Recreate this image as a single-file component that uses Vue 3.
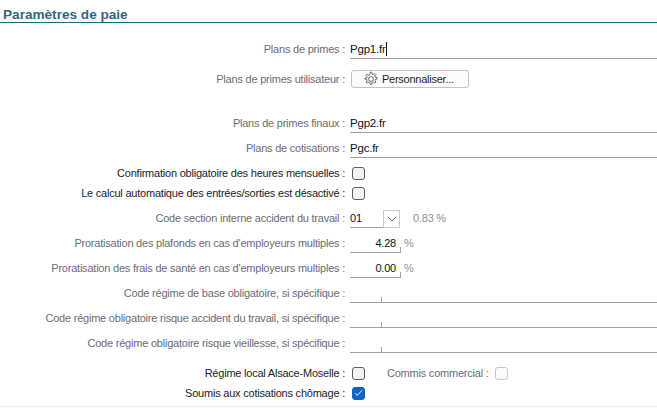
<script setup>
const gear = "M9 1.5h2l.4 2.2 1.5.6 1.8-1.3 1.4 1.4-1.3 1.8.6 1.5 2.2.4v2l-2.2.4-.6 1.5 1.3 1.8-1.4 1.4-1.8-1.3-1.5.6-.4 2.2H9l-.4-2.2-1.5-.6-1.8 1.3-1.4-1.4 1.3-1.8-.6-1.5-2.2-.4V9l2.2-.4.6-1.5-1.3-1.8 1.4-1.4 1.8 1.3 1.5-.6z"
</script>

<template>
  <div class="page">
    <h2 class="title">Paramètres de paie</h2>
    <div class="form">
      <div class="row h25 first">
        <span class="label">Plans de primes :</span>
        <div class="field line">Pgp1.fr<i class="caret"></i></div>
      </div>
      <div class="row btn-row">
        <span class="label">Plans de primes utilisateur :</span>
        <button class="btn">
          <svg width="16" height="16" viewBox="0 0 20 20" fill="none" stroke="#555" stroke-width="1.1">
            <path :d="gear" />
            <circle cx="10" cy="10" r="3" />
          </svg>
          Personnaliser...
        </button>
      </div>
      <div class="row h25 final">
        <span class="label">Plans de primes finaux :</span>
        <div class="field line">Pgp2.fr</div>
      </div>
      <div class="row h25">
        <span class="label">Plans de cotisations :</span>
        <div class="field line">Pgc.fr</div>
      </div>
      <div class="row h20 chk-first">
        <span class="label dark">Confirmation obligatoire des heures mensuelles :</span>
        <span class="check"></span>
      </div>
      <div class="row h20">
        <span class="label dark">Le calcul automatique des entrées/sorties est désactivé :</span>
        <span class="check"></span>
      </div>
      <div class="row h25">
        <span class="label">Code section interne accident du travail :</span>
        <div class="select">
          <div class="sel-val">01</div>
          <div class="sel-btn">
            <svg width="10" height="6" viewBox="0 0 10 6" fill="none" stroke="#666" stroke-width="1"><path d="M1 1l4 4 4-4" /></svg>
          </div>
        </div>
        <span class="unit wide">0.83 %</span>
      </div>
      <div class="row h25">
        <span class="label">Proratisation des plafonds en cas d'employeurs multiples :</span>
        <div class="num">4.28</div>
        <span class="unit">%</span>
      </div>
      <div class="row h25">
        <span class="label">Proratisation des frais de santé en cas d'employeurs multiples :</span>
        <div class="num">0.00</div>
        <span class="unit">%</span>
      </div>
      <div class="row h25">
        <span class="label">Code régime de base obligatoire, si spécifique :</span>
        <div class="field line split"></div>
      </div>
      <div class="row h25">
        <span class="label">Code régime obligatoire risque accident du travail, si spécifique :</span>
        <div class="field line split"></div>
      </div>
      <div class="row h25">
        <span class="label">Code régime obligatoire risque vieillesse, si spécifique :</span>
        <div class="field line split"></div>
      </div>
      <div class="row h20 chk-last">
        <span class="label dark">Régime local Alsace-Moselle :</span>
        <span class="check"></span>
        <span class="commis">Commis commercial :</span>
        <span class="check off"></span>
      </div>
      <div class="row h20">
        <span class="label dark">Soumis aux cotisations chômage :</span>
        <span class="check on">
          <svg width="9" height="8" viewBox="0 0 9 8" fill="none" stroke="#fff" stroke-width="1"><path d="M1 4.2l2.2 2.2L8 1.4" /></svg>
        </span>
      </div>
    </div>
    <div class="bottom"></div>
  </div>
</template>

<style scoped>
.page {
  width: 657px;
  height: 415px;
  background: #fff;
  overflow: hidden;
  font-family: "Liberation Sans", Arial, sans-serif;
  font-size: 11px;
  letter-spacing: -0.22px;
  color: #6b6b7b;
}
.title {
  margin: 0;
  height: 23px;
  box-sizing: border-box;
  padding: 7px 0 0 3px;
  font-size: 13.6px;
  letter-spacing: 0;
  line-height: 15px;
  font-weight: bold;
  color: #2f6884;
  border-bottom: 1px solid #1c6a8c;
}
.form {
  display: flex;
  flex-direction: column;
}
.row {
  display: flex;
  align-items: center;
}
.h25 {
  height: 25px;
  align-items: flex-end;
}
.h25 .label { line-height: 19px; }
.h20 { height: 20px; }
.first { margin-top: 11px; }
.btn-row { margin-top: 10px; height: 19px; }
.final { margin-top: 20px; }
.chk-first { margin-top: 5px; }
.chk-last { margin-top: 10px; }
.label {
  width: 345px;
  flex: none;
  text-align: right;
  white-space: nowrap;
}
.dark { color: #1c1c28; }
.field {
  margin-left: 5px;
  flex: 1;
  height: 20px;
  line-height: 21px;
  font-size: 11.5px;
  box-sizing: border-box;
  color: #10102a;
  position: relative;
}
.line { border-bottom: 1px solid #a0a0a0; }
.caret {
  display: inline-block;
  width: 1px;
  height: 14px;
  background: #111;
  vertical-align: -3px;
}
.split::after {
  content: "";
  position: absolute;
  left: 31px;
  bottom: 0;
  width: 1px;
  height: 5px;
  background: #a0a0a0;
}
.btn {
  margin-left: 6px;
  width: 118px;
  height: 18px;
  padding: 0 0 0 11px;
  display: flex;
  align-items: center;
  gap: 3px;
  background: #fcfcfc;
  border: 1px solid #c4c4c4;
  border-radius: 3px;
  font: inherit;
  letter-spacing: -0.25px;
  color: #1c1c28;
}
.check {
  margin-left: 7px;
  width: 13px;
  height: 13px;
  flex: none;
  display: flex;
  align-items: center;
  justify-content: center;
  background: #f4f4f4;
  border: 1px solid #5c5c5c;
  border-radius: 3px;
  box-sizing: border-box;
}
.check.off {
  background: #fafafa;
  border-color: #c8c8c8;
  margin-left: 6px;
}
.check.on {
  background: #0f62c0;
  border-color: #0f62c0;
}
.commis { margin-left: 22px; }
.select {
  margin-left: 5px;
  display: flex;
  height: 18px;
}
.sel-val {
  width: 33px;
  line-height: 17px;
  box-sizing: border-box;
  color: #10102a;
  border-bottom: 1px solid #a0a0a0;
}
.sel-btn {
  width: 17px;
  height: 18px;
  box-sizing: border-box;
  border: 1px solid #ccc;
  display: flex;
  align-items: center;
  justify-content: center;
}
.unit {
  margin-left: 3px;
  line-height: 19px;
  color: #8d8d99;
}
.unit.wide { margin-left: 13px; }
.num {
  margin-left: 5px;
  width: 51px;
  height: 19px;
  line-height: 18px;
  box-sizing: border-box;
  text-align: right;
  padding-right: 5px;
  color: #10102a;
  border-bottom: 1px solid #a0a0a0;
  position: relative;
}
.num::after {
  content: "";
  position: absolute;
  right: 0;
  bottom: 0;
  width: 1px;
  height: 5px;
  background: #a0a0a0;
}
.bottom {
  margin-top: 3px;
  height: 1px;
  background: #eeeeee;
}
</style>
